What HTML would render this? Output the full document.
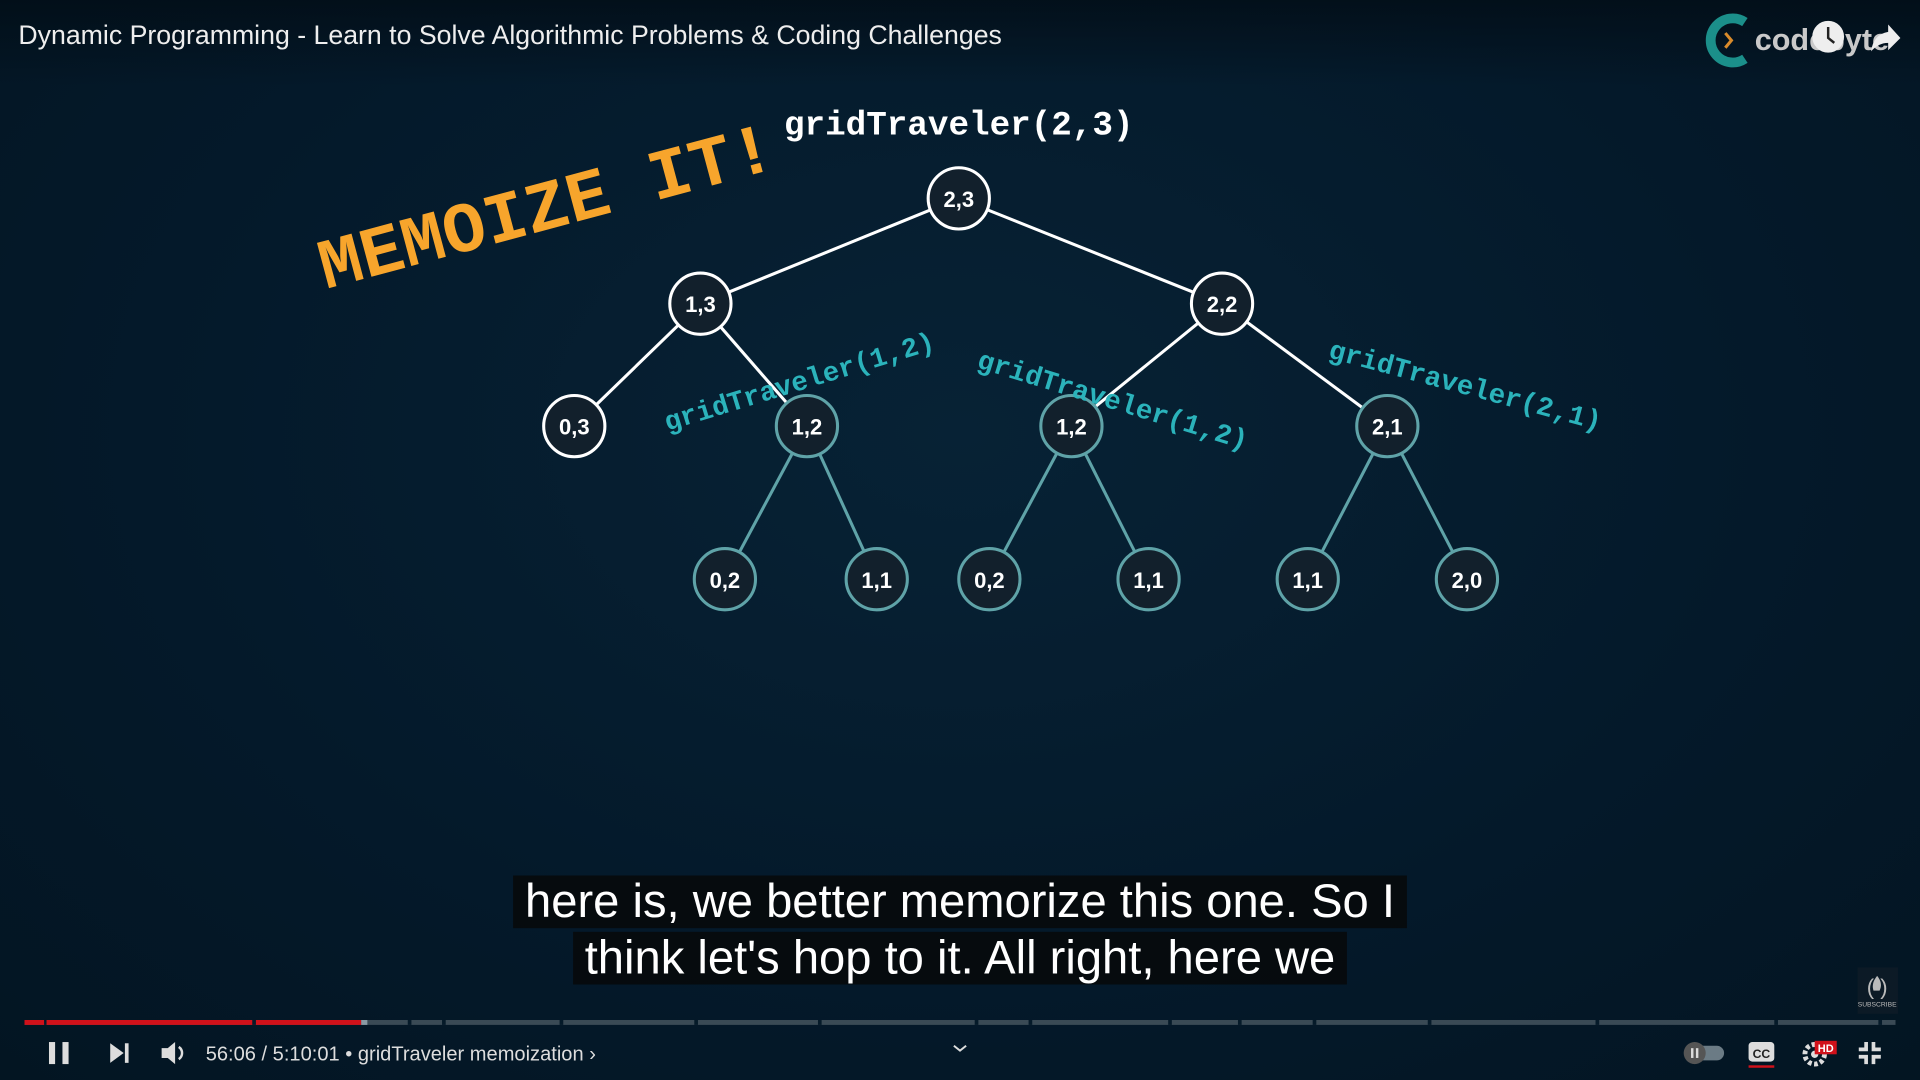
<!DOCTYPE html>
<html><head><meta charset="utf-8"><style>
html,body{margin:0;padding:0;background:#051a29;overflow:hidden}
#w{width:1568px;height:882px;transform:scale(1.22449);transform-origin:0 0;position:relative;
background:radial-gradient(ellipse at 50% 40%,#072235 0%,#04192a 60%,#031522 100%);font-family:"Liberation Sans",sans-serif}
.sub{position:absolute;left:0;width:1568px;text-align:center;font-size:38.5px;color:#fff;line-height:46px}
.sub span{background:rgba(8,8,8,0.8);padding:0 10px}
</style></head><body><div id="w">
<div style="position:absolute;left:0;top:0;width:1568px;height:70px;background:linear-gradient(#020d16cc,transparent)"></div>
<div style="position:absolute;left:15px;top:16px;font-size:21.8px;color:#eee">Dynamic Programming - Learn to Solve Algorithmic Problems &amp; Coding Challenges</div>
<svg width="1568" height="882" style="position:absolute;left:0;top:0" font-family="Liberation Sans,sans-serif">
<path d="M1425 18 A18 18 0 1 0 1425 48" stroke="#1b8f8a" stroke-width="8" fill="none"/>
<path d="M1409 27 l5 6 l-5 6" stroke="#d98b2b" stroke-width="2.5" fill="none"/>
<text x="1433" y="41" font-size="25" font-weight="bold" fill="#c9c9c9">codebyte</text>
<circle cx="1493" cy="30" r="13" fill="#eee"/><path d="M1493 22 v9 l5 4" stroke="#222" stroke-width="2" fill="none"/>
<path d="M1528 42 q2 -14 14 -16 v-6 l10 11 l-10 10 v-6 q-8 0 -14 7z" fill="#eee"/>
<text x="783" y="110" font-size="28" font-weight="bold" fill="#fff" text-anchor="middle" font-family="Liberation Mono,monospace">gridTraveler(2,3)</text>
<text transform="translate(266,236) rotate(-15)" font-size="58" font-weight="bold" fill="#f7a52c" font-family="Liberation Mono,monospace">MEMOIZE IT!</text>
<g stroke="#fff" stroke-width="2.5">
<line x1="783" y1="162" x2="572" y2="248"/><line x1="783" y1="162" x2="998" y2="248"/>
<line x1="572" y1="248" x2="469" y2="348"/><line x1="572" y1="248" x2="659" y2="348"/>
<line x1="998" y1="248" x2="875" y2="348"/><line x1="998" y1="248" x2="1133" y2="348"/>
</g>
<g stroke="#5fa3a8" stroke-width="2.5">
<line x1="659" y1="348" x2="592" y2="473"/><line x1="659" y1="348" x2="716" y2="473"/>
<line x1="875" y1="348" x2="808" y2="473"/><line x1="875" y1="348" x2="938" y2="473"/>
<line x1="1133" y1="348" x2="1068" y2="473"/><line x1="1133" y1="348" x2="1198" y2="473"/>
</g>
<g fill="#12202c" stroke-width="2.5" font-size="18" text-anchor="middle">
<g stroke="#fff"><circle cx="783" cy="162" r="25"/><circle cx="572" cy="248" r="25"/><circle cx="998" cy="248" r="25"/><circle cx="469" cy="348" r="25"/></g>
<g stroke="#5fa3a8"><circle cx="659" cy="348" r="25"/><circle cx="875" cy="348" r="25"/><circle cx="1133" cy="348" r="25"/>
<circle cx="592" cy="473" r="25"/><circle cx="716" cy="473" r="25"/><circle cx="808" cy="473" r="25"/><circle cx="938" cy="473" r="25"/><circle cx="1068" cy="473" r="25"/><circle cx="1198" cy="473" r="25"/></g>
<g fill="#fff" font-weight="bold"><text x="783" y="169">2,3</text><text x="572" y="255">1,3</text><text x="998" y="255">2,2</text><text x="469" y="355">0,3</text>
<text x="659" y="355">1,2</text><text x="875" y="355">1,2</text><text x="1133" y="355">2,1</text>
<text x="592" y="480">0,2</text><text x="716" y="480">1,1</text><text x="808" y="480">0,2</text><text x="938" y="480">1,1</text><text x="1068" y="480">1,1</text><text x="1198" y="480">2,0</text></g>
</g>
<g font-size="22.5" font-weight="bold" fill="#2bb3bb" font-family="Liberation Mono,monospace">
<text transform="translate(545,352) rotate(-17)">gridTraveler(1,2)</text>
<text transform="translate(797,300) rotate(17)">gridTraveler(1,2)</text>
<text transform="translate(1084,292) rotate(15)">gridTraveler(2,1)</text>
</g>
<rect x="20" y="833" width="1528" height="4" fill="#3a4a55"/>
<rect x="20" y="833" width="275" height="4" fill="#d0111a"/>
<rect x="295" y="833" width="5" height="4" fill="#8a9aa4"/>
<g fill="#051a29"><rect x="36" y="833" width="2" height="4"/><rect x="206" y="833" width="3" height="4"/><rect x="333" y="833" width="3" height="4"/><rect x="361" y="833" width="3" height="4"/><rect x="457" y="833" width="3" height="4"/><rect x="567" y="833" width="3" height="4"/><rect x="668" y="833" width="3" height="4"/><rect x="796" y="833" width="3" height="4"/><rect x="840" y="833" width="3" height="4"/><rect x="954" y="833" width="3" height="4"/><rect x="1011" y="833" width="3" height="4"/><rect x="1072" y="833" width="3" height="4"/><rect x="1166" y="833" width="3" height="4"/><rect x="1303" y="833" width="3" height="4"/><rect x="1449" y="833" width="3" height="4"/><rect x="1534" y="833" width="3" height="4"/></g>
<g fill="#ddd"><rect x="40" y="851" width="5" height="18"/><rect x="51" y="851" width="5" height="18"/>
<path d="M90 852 l11 8 l-11 8z"/><rect x="102" y="852" width="3" height="16"/>
<path d="M132 856 h5 l6 -5 v18 l-6 -5 h-5z"/><path d="M146 855 a6 6 0 0 1 0 10" stroke="#ddd" stroke-width="2" fill="none"/></g>
<text x="168" y="866" font-size="16.4" fill="#ddd">56:06 / 5:10:01 • gridTraveler memoization ›</text>
<path d="M779 854 l5 4 l5 -4" stroke="#ddd" stroke-width="1.6" fill="none"/>
<rect x="1376" y="854" width="32" height="12" rx="6" fill="#6b7b85"/><circle cx="1384" cy="860" r="9" fill="#555"/><rect x="1381" y="856" width="2" height="8" fill="#ddd"/><rect x="1385" y="856" width="2" height="8" fill="#ddd"/>
<rect x="1428" y="851" width="21" height="16" rx="3" fill="#ddd"/><text x="1438.5" y="864" font-size="10" font-weight="bold" fill="#222" text-anchor="middle">CC</text><rect x="1428" y="870" width="21" height="2" fill="#d0111a"/>
<circle cx="1482" cy="861" r="8" fill="none" stroke="#ddd" stroke-width="4" stroke-dasharray="3 2"/><circle cx="1482" cy="861" r="3" fill="#ddd"/>
<rect x="1482" y="850" width="18" height="11" fill="#d0111a"/><text x="1491" y="859" font-size="9" font-weight="bold" fill="#fff" text-anchor="middle">HD</text>
<g stroke="#ddd" stroke-width="3" fill="none"><path d="M1518 857 h6 v-6"/><path d="M1536 857 h-6 v-6"/><path d="M1518 863 h6 v6"/><path d="M1536 863 h-6 v6"/></g>
<rect x="1517" y="790" width="33" height="38" fill="#0c1a26"/><text x="1533" y="812" font-size="18" fill="#bbb" text-anchor="middle">( )</text><path d="M1533 797 q5 6 2 12 h-5 q-2 -6 3 -12z" fill="#bbb"/><text x="1533" y="822" font-size="5.5" fill="#bbb" text-anchor="middle">SUBSCRIBE</text>
</svg>
<div class="sub" style="top:714px"><span>here is, we better memorize this one. So I</span></div>
<div class="sub" style="top:760px"><span>think let's hop to it. All right, here we</span></div>
</div></body></html>
